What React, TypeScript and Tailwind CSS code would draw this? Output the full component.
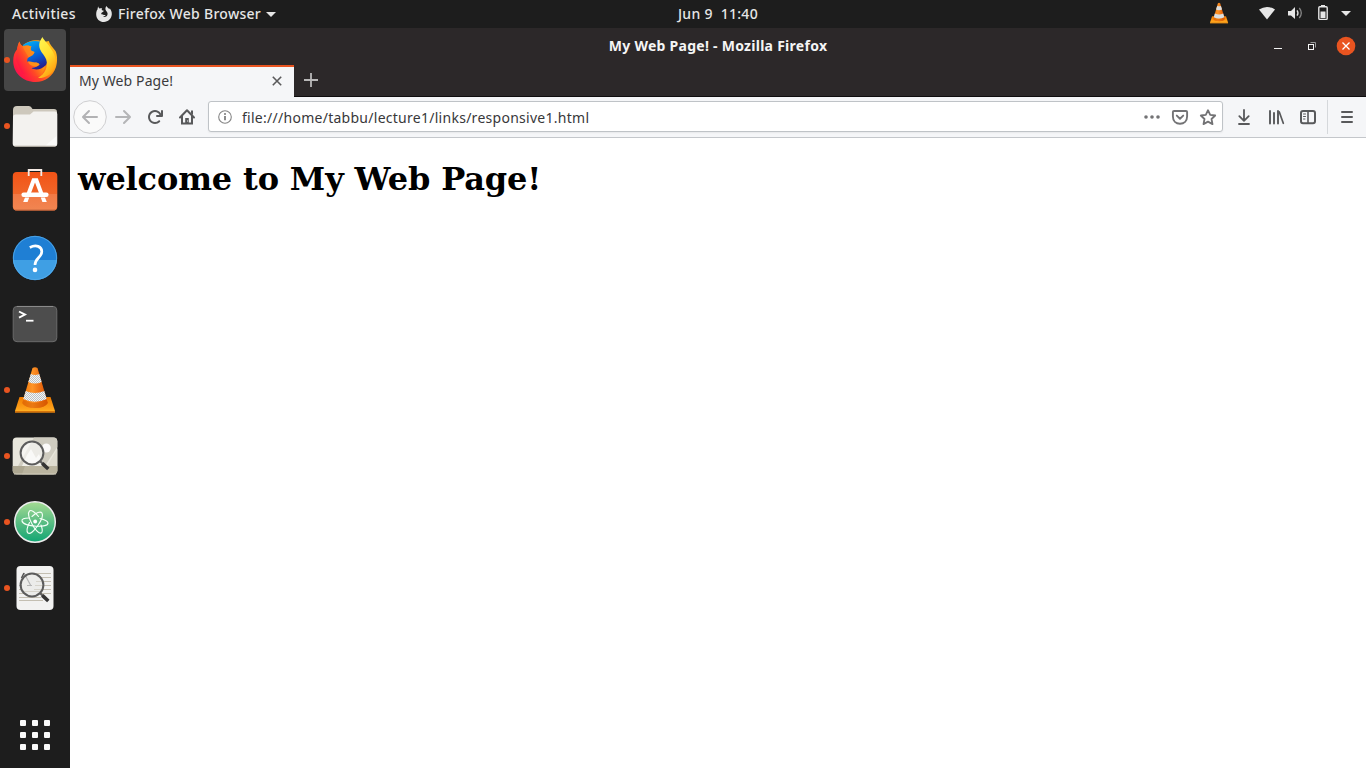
import type { ReactNode } from "react";

const UI = "font-['Noto_Sans','Open_Sans',sans-serif]";

function Firefox() {
  return (
    <g>
      <defs>
        <linearGradient id="ffBody" x1="0" y1="1" x2="1" y2="0.25">
          <stop offset="0" stopColor="#d8108a" />
          <stop offset="0.2" stopColor="#ff1744" />
          <stop offset="0.45" stopColor="#ff4a25" />
          <stop offset="0.7" stopColor="#ff9410" />
          <stop offset="1" stopColor="#ffbd1d" />
        </linearGradient>
        <linearGradient id="ffGlobe" x1="0.3" y1="0" x2="0.7" y2="1">
          <stop offset="0" stopColor="#00a8f4" />
          <stop offset="0.5" stopColor="#0660d8" />
          <stop offset="1" stopColor="#2b1580" />
        </linearGradient>
        <linearGradient id="ffFlame" x1="0.2" y1="0" x2="0.7" y2="1">
          <stop offset="0" stopColor="#fff44f" />
          <stop offset="0.5" stopColor="#ffdf2e" />
          <stop offset="1" stopColor="#ff980e" />
        </linearGradient>
      </defs>
      <path d="M19.5 41.5C20 44 21 45 22.5 46C28 40 38 39 44 42L48.8 41C49.5 44 53 48 55.5 51C57.5 55 57.5 62 56 67C53 76 45 82 35.5 82C23 82 13.2 73 13.2 61C13.2 56 14.5 52 17 49.5C17.5 46 18 43.5 19.5 41.5Z" fill="url(#ffBody)" />
      <path d="M23 45C29 40 38 40 44 43L47.5 57C48 67 42 71.5 35 70.5C28 70 24 66 24 60Z" fill="url(#ffGlobe)" />
      <path d="M19.5 41.5C20 44.5 21.5 46 23 46.2C25.5 45.2 27.5 45.5 28.5 45.6L31.5 46.5C30.5 48 30.5 49.5 31 50.5L34.5 52C34 54.5 31.5 56 28.5 57.5C27 58.5 27.5 60 27 61.5C30 61 32 62.5 34.5 62.5C37 62.5 38.5 63 39.5 64.5C38 66.5 35.5 67.5 31.5 68C35 70.5 41 70 46 65L41 77L22 74L16 60L17 49Z" fill="url(#ffBody)" />
      <path d="M22.5 46.2C25.5 45.2 28 45.5 31.5 46.5C30.5 48 30.5 49.5 31 50.5L34.5 52C34 54.5 31.5 56 28.5 57.5C27 54 24 50 22.5 46.2Z" fill="#ff8a1c" opacity=".65" />
      <path d="M28 61.5C32 61 33 62.5 36 62.5C38 62.5 39 63.5 39.5 64.5C38 66.5 35 66.5 33 66C30 65 28.5 63.5 28 61.5Z" fill="#ff9a18" opacity=".8" />
      <path d="M42.5 37C43.5 40 48 43.5 50.5 48C54 53 58 60 54.5 68C51 76 43 78.5 38 78C45 74 48.5 67 46.2 59.5C44.5 54.5 39 51 39.2 45C39.2 42 41 39 42.5 37Z" fill="url(#ffFlame)" />
    </g>
  );
}

function Folder() {
  return (
    <g>
      <path d="M13 110Q13 106 17 106H29Q31 106 32.5 109H54Q57 109 57 112V142Q57 146 54 146H16Q13 146 13 143Z" fill="#cdc8bc" />
      <path d="M13 117Q13 114.5 15.5 114.5H30L33.5 111.5H55Q57.3 111.5 57.3 114V143.5Q57.3 146.5 54.5 146.5H15.5Q12.7 146.5 12.7 143.5Z" fill="#f3f2ef" />
      <path d="M56.5 136V146H45Z" fill="#fff" opacity=".6" />
      <path d="M14.5 146.2H55.5" stroke="#bbb6aa" strokeWidth="1" />
    </g>
  );
}

function Software() {
  return (
    <g>
      <defs>
        <linearGradient id="bag" x1="0" y1="0" x2="0" y2="1">
          <stop offset="0" stopColor="#f25316" />
          <stop offset="1" stopColor="#ef7438" />
        </linearGradient>
      </defs>
      <rect x="12.8" y="172" width="44.5" height="38.5" rx="4" fill="url(#bag)" />
      <path d="M13 194H57V206Q57 210 53 210H17Q13 210 13 206Z" fill="#fff" opacity=".13" />
      <path d="M15 210H55" stroke="#c6673f" />
      <path d="M28.7 176V170H41.3V176" fill="none" stroke="#f6ebe5" strokeWidth="1.8" />
      <path d="M32 178.3H38L48 202H43.3L35 182.5L26.7 202H22L23.5 198.5Z" fill="#fff" opacity="0" />
      <path d="M32.2 178.2H37.8L43.3 193H39L35 182.5L31 193H26.7Z" fill="#fff" />
      <path d="M25 197.5H29.2L27.6 202H23.2ZM40.8 197.5H45L46.8 202H42.4Z" fill="#fff" />
      <path d="M23.6 194.7H46.4" stroke="#fff" strokeWidth="4.4" strokeLinecap="round" />
    </g>
  );
}

function Help() {
  return (
    <g>
      <circle cx="35" cy="258" r="22.2" fill="#1f7fd4" />
      <path d="M12.9 260H57.1A22.2 22.2 0 0 1 12.9 260Z" fill="#3f9fe4" />
      <circle cx="35" cy="258" r="21.6" fill="none" stroke="#5eb0ea" strokeWidth="1" opacity=".7" />
      <path d="M29.8 247.5C36 244.3 41.8 246.4 41.8 251.5C41.8 257.5 35.2 257.5 35 265" fill="none" stroke="#fff" strokeWidth="2.7" />
      <circle cx="35" cy="269.9" r="2.3" fill="#fff" />
    </g>
  );
}

function Terminal() {
  return (
    <g>
      <rect x="13.2" y="306.4" width="43.6" height="35.3" rx="3.8" fill="#4d4d4d" stroke="#6b6b6b" strokeWidth="1" />
      <path d="M17 306.5H53" stroke="#8a8a8a" />
      <path d="M19 311.5L25 314.6L19 317.7" fill="none" stroke="#fff" strokeWidth="1.9" />
      <path d="M26 320.7H33.5" stroke="#fff" strokeWidth="1.8" />
    </g>
  );
}

function Cone({ id }: { id: string }) {
  const body = `url(#${id}o)`;
  const check = `url(#${id}w)`;
  return (
    <g>
      <defs>
        <linearGradient id={`${id}o`} x1="0" y1="0" x2="1" y2="0">
          <stop offset="0" stopColor="#ee7508" />
          <stop offset="0.4" stopColor="#ff9426" />
          <stop offset="1" stopColor="#d94c00" />
        </linearGradient>
        <linearGradient id={`${id}b`} x1="0" y1="0" x2="0" y2="1">
          <stop offset="0" stopColor="#f07a00" />
          <stop offset="0.8" stopColor="#ffa51c" />
          <stop offset="1" stopColor="#ffc02d" />
        </linearGradient>
        <pattern id={`${id}w`} width="2" height="2" patternUnits="userSpaceOnUse">
          <rect width="2" height="2" fill="#f4f5f6" />
          <rect width="1" height="1" fill="#bcc1c4" />
          <rect x="1" y="1" width="1" height="1" fill="#bcc1c4" />
        </pattern>
      </defs>
      <path d="M19.5 397H50.5L55 411V412.5H15V411Z" fill={`url(#${id}b)`} />
      <path d="M15 411.8H55" stroke="#c85d00" strokeWidth="1.2" />
      <path d="M32.5 368Q35 366.5 37.5 368L47.8 403Q45 408 35 408T22.2 403Z" fill={body} />
      <path d="M22.2 403Q25 408 35 408T47.8 403L46.5 400Q40 403 35 403T23.5 400Z" fill="#d65f00" opacity=".5" />
      <path d="M30.8 374Q35 376 39.2 374L41.7 382Q35 385 28.3 382Z" fill={check} />
      <path d="M25.7 391Q35 395 44.3 391L46.7 399Q35 404.5 23.3 399Z" fill={check} />
    </g>
  );
}

function ImageViewer() {
  return (
    <g>
      <rect x="12.7" y="437.5" width="44.6" height="36.8" rx="4" fill="#e8e6dc" />
      <path d="M34 437.5H53.3Q57.3 437.5 57.3 441.5V447L45 466H18Z" fill="#cfccc0" />
      <path d="M47 466L57.3 449V466Z" fill="#dedbcf" />
      <path d="M27 455L31 449L36 458L39 454L44 466H22Z" fill="#f1f0ea" />
      <path d="M12.7 466H57.3V470.3Q57.3 474.3 53.3 474.3H16.7Q12.7 474.3 12.7 470.3Z" fill="#ada791" />
      <path d="M25 466H57.3V470.3Q57.3 474.3 53.3 474.3H22Z" fill="#bab49f" />
      <path d="M14 474H56" stroke="#d0cbbb" />
      <circle cx="46.3" cy="448" r="4.5" fill="#fff" opacity=".9" />
      <circle cx="32" cy="453" r="11.2" fill="#fff" opacity=".6" />
      <Magnifier y={453} />
    </g>
  );
}

function Magnifier({ y }: { y: number }) {
  return (
    <g fill="none" stroke="#5c5c5c">
      <circle cx="32" cy={y} r="11.4" strokeWidth="2" />
      <path d={`M40 ${y + 8}L43 ${y + 11}`} strokeWidth="2.2" />
      <path d={`M42.3 ${y + 10.4}L48.3 ${y + 16}`} stroke="#343434" strokeWidth="3.6" />
    </g>
  );
}

function Atom() {
  return (
    <g>
      <defs>
        <linearGradient id="atom" x1="0" y1="0" x2="0" y2="1">
          <stop offset="0" stopColor="#a5dc93" />
          <stop offset="0.5" stopColor="#5bbd83" />
          <stop offset="1" stopColor="#10a673" />
        </linearGradient>
      </defs>
      <circle cx="35" cy="522" r="20.3" fill="url(#atom)" stroke="#ececec" strokeWidth="1.5" />
      <g fill="none" stroke="#f5fff8" strokeWidth="1.15" strokeLinecap="round">
        <path d="M29 518C24 518 21.5 519 22 521C22.7 524 29 526 36 526.2C43 526.5 48.3 525.5 48 523C47.8 521 44 519.5 40 518.5" />
        <path d="M38.5 516.5C35 512 31 509.5 29.5 511C27.5 513 29.5 519.5 32.5 525C35.5 530.5 39.5 534 41.3 533C42.8 532 42.3 528.5 41 525" />
        <path d="M32 516.5C36 512.5 40.5 511 42 513C43.5 515.5 41 521 37.5 526C34 531 30 534.5 28 533C26 531.5 27.5 526.5 29.5 522.5" />
      </g>
      <circle cx="35.2" cy="521.5" r="1.9" fill="#fff" />
    </g>
  );
}

function DocViewer() {
  return (
    <g>
      <rect x="16.5" y="566" width="37" height="44" rx="4" fill="#f2f2f1" />
      <path d="M36 573.5H51M38 577.5H51M38 581.5H51M39 585.5H51M38 589.5H51M36 593.5H51M19 589.5H24M19 593.5H26M19 597.5H41M19 600.5H43" stroke="#c4bfb2" strokeWidth="1" />
      <circle cx="32" cy="585" r="11" fill="#ececea" />
      <path d="M36 581.5H43M35 585.5H43M34 589.5H43M23 591.5H40" stroke="#d6d3ca" strokeWidth="1" />
      <path d="M24 573L31 586M27 585.5H32M19 585.5H22" stroke="#b5b5b5" strokeWidth="1.2" />
      <path d="M24 573L21.5 578" stroke="#555" strokeWidth="1.5" />
      <Magnifier y={585} />
    </g>
  );
}

const launchers: { name: string; running: boolean; icon: ReactNode; viewBox: string }[] = [
  { name: "Firefox", running: true, icon: <Firefox />, viewBox: "4 29 62 62" },
  { name: "Files", running: true, icon: <Folder />, viewBox: "4 95 62 62" },
  { name: "Software", running: false, icon: <Software />, viewBox: "4 161 62 62" },
  { name: "Help", running: false, icon: <Help />, viewBox: "4 227 62 62" },
  { name: "Terminal", running: false, icon: <Terminal />, viewBox: "4 293 62 62" },
  { name: "VLC", running: true, icon: <Cone id="dock" />, viewBox: "4 359 62 62" },
  { name: "Image Viewer", running: true, icon: <ImageViewer />, viewBox: "4 425 62 62" },
  { name: "Atom", running: true, icon: <Atom />, viewBox: "4 491 62 62" },
  { name: "Document Viewer", running: true, icon: <DocViewer />, viewBox: "4 557 62 62" },
];

function Dock() {
  return (
    <nav className="flex w-[70px] shrink-0 flex-col items-center bg-[#1d1d1d] pt-px">
      <div className="flex flex-col gap-1">
        {launchers.map((l, i) => (
          <button key={l.name} className={i === 0 ? "relative size-[62px] rounded bg-[#464646]" : "relative size-[62px]"}>
            <svg className="block size-[62px]" viewBox={l.viewBox}>{l.icon}</svg>
            {l.running && <span className="absolute top-[28px] left-0 size-[6px] rounded-full bg-[#e95420]" />}
          </button>
        ))}
      </div>
      <div className="mt-auto mb-[18px] grid grid-cols-3 gap-[6px]">
        {Array.from({ length: 9 }, (_, i) => (
          <span key={i} className="size-[6px] rounded-[1px] bg-[#f7f7f7]" />
        ))}
      </div>
    </nav>
  );
}

function TopBar() {
  return (
    <header className={`${UI} flex h-7 shrink-0 items-center bg-[#1d1d1d] text-[14px] leading-[20px] font-medium text-[#e6e6e6]`}>
      <div className="flex w-[678px] shrink-0 items-center pl-3">
        <span className="w-[84px] whitespace-nowrap tracking-[0.35px]">Activities</span>
        <svg className="mr-1.5 size-4" viewBox="0 0 16 16">
          <path d="M2.4 0.3C2.4 1.6 2.8 2.2 3.7 2.5C4.6 2.2 5.4 2.2 6.2 2.6C5.6 3.2 5.6 3.9 6 4.2L7.8 4.8C7.6 5.9 6 6.2 5.4 6.9C5.2 7.5 5.3 8 5.2 8.3C6.2 8 7 8.5 7.8 8.9C8.6 9.2 9.2 8.8 9.6 9.3C9.1 10.3 8 10.4 7.2 10.4C9.5 12 12.3 9.8 11.4 6.8C10.9 5.4 9.1 4.3 9.4 2.2C9.5 1.2 10 .6 10.6 0C11 1.4 12.8 2.1 13.3 3.2L13.7 2.2C15.2 4 16 6 15.8 8.6C15.4 13 12 16 8 16C3.5 16 .2 12.7 .2 8.4C.2 6 .6 4.6 1.5 3.6C1.6 2.3 1.8 1.2 2.4 .3Z" fill="#e6e6e6" />
        </svg>
        <span className="w-[148px] whitespace-nowrap tracking-[0.28px]">Firefox Web Browser</span>
        <svg className="h-[5px] w-[10px]" viewBox="0 0 10 5"><path d="M0 0H10L5 5Z" fill="#e6e6e6" /></svg>
      </div>
      <span className="whitespace-pre -mt-px tracking-[0.3px]">Jun 9  11:40</span>
      <svg className="ml-auto h-7 w-[160px]" viewBox="1206 0 160 28">
        <g transform="translate(1203.3 -162.4) scale(.45)"><Cone id="tray" /></g>
        <path d="M1259 9.5Q1267 4.5 1275 9.5L1267 19.5Z" fill="#e6e6e6" />
        <path d="M1288 11H1291L1295 7V19L1291 15.5H1288Z" fill="#e6e6e6" />
        <path d="M1297 10.3Q1299 13 1297 15.7" fill="none" stroke="#ddd" strokeWidth="1.3" />
        <path d="M1299.3 8Q1303.3 13 1299.3 18" fill="none" stroke="#858585" strokeWidth="1.3" />
        <path d="M1321 5H1325V7H1321Z" fill="#e6e6e6" />
        <rect x="1318.8" y="6.8" width="8.4" height="12.6" rx="1" fill="none" stroke="#e6e6e6" strokeWidth="1.4" />
        <path d="M1320.5 11.5H1325.5V18H1320.5Z" fill="#e6e6e6" />
        <path d="M1341 11H1351L1346 16Z" fill="#e6e6e6" />
      </svg>
    </header>
  );
}

function TitleBar() {
  return (
    <div className="flex h-9 shrink-0 items-center bg-[#2c2829]">
      <div className="w-[120px]" />
      <h2 className={`${UI} flex-1 text-center text-[14px] leading-5 font-bold whitespace-nowrap tracking-[0.27px] text-[#f5f5f5]`}>My Web Page! - Mozilla Firefox</h2>
      <svg className="h-9 w-[120px]" viewBox="1246 28 120 36">
        <path d="M1274 48.5H1282" stroke="#f2f2f2" />
        <path d="M1310.5 42.5H1315.5V47.5" fill="none" stroke="#999" />
        <rect x="1308.5" y="44.5" width="5" height="5" fill="none" stroke="#f5f5f5" />
        <circle cx="1346" cy="46" r="9.3" fill="#e95420" />
        <path d="M1342.5 42.5L1349.5 49.5M1349.5 42.5L1342.5 49.5" stroke="#fff" strokeWidth="1.3" />
      </svg>
    </div>
  );
}

function TabStrip() {
  return (
    <div className="flex h-[33px] shrink-0 border-b border-[#0f0d0e] bg-[#2c2829] pt-px">
      <div className="flex h-8 w-[224px] items-center border-t-2 border-[#e95420] bg-[#f5f6f8] pl-[9px]">
        <span className={`${UI} -mt-0.5 text-[14px] leading-5 whitespace-nowrap tracking-[0.1px] text-[#3b3b3d]`}>My Web Page!</span>
        <svg className="mt-[-2px] mr-3 ml-auto size-[10px]" viewBox="0 0 10 10"><path d="M.8 .8L9.2 9.2M9.2 .8L.8 9.2" stroke="#5a5a5b" strokeWidth="1.6" /></svg>
      </div>
      <svg className="mt-2 ml-[10px] size-[14px]" viewBox="0 0 14 14"><path d="M7 0V14M0 7H14" stroke="#b9b8b8" strokeWidth="1.8" /></svg>
    </div>
  );
}

function Toolbar() {
  return (
    <div className="flex h-[41px] shrink-0 items-center border-b border-[#c4c7cb] bg-[#f5f6f8]">
      <svg className="h-10 w-[138px] shrink-0" viewBox="70 97 138 40">
        <circle cx="90" cy="117" r="16.3" fill="#fafafa" stroke="#cfcfd1" />
        <path transform="translate(82 109)" fill="#b2b2b4" d="M15 7H3.414l4.293-4.293a1 1 0 0 0-1.414-1.414l-6 6a1 1 0 0 0 0 1.414l6 6a1 1 0 0 0 1.414-1.414L3.414 9H15a1 1 0 0 0 0-2z" />
        <path transform="translate(115 109)" fill="#b4b5b7" d="M15.707 7.293l-6-6a1 1 0 0 0-1.414 1.414L12.586 7H1a1 1 0 0 0 0 2h11.586l-4.293 4.293a1 1 0 1 0 1.414 1.414l6-6a1 1 0 0 0 0-1.414z" />
        <path transform="translate(147 109)" fill="#58595b" d="M15 1a1 1 0 0 0-1 1v2.418A6.995 6.995 0 1 0 8 15a6.954 6.954 0 0 0 4.95-2.05 1 1 0 0 0-1.414-1.414A5.019 5.019 0 1 1 12.549 6H10a1 1 0 0 0 0 2h5a1 1 0 0 0 1-1V2a1 1 0 0 0-1-1z" />
        <path d="M180 117.5L187 110.3L194 117.5" fill="none" stroke="#58595b" strokeWidth="2" strokeLinecap="round" strokeLinejoin="round" />
        <path d="M182 116V123.6H192V116" fill="none" stroke="#58595b" strokeWidth="2" />
        <path d="M185.2 118H188.8V124H185.2ZM191 110.5H193V115L191 113.5Z" fill="#58595b" />
        <path d="M187 121H188" stroke="#f5f6f8" />
      </svg>
      <div className="-mt-px flex h-[31px] w-[1015px] items-center rounded-[3px] border border-[#bfc3c7] bg-white pl-[9px] shadow-[0_1px_2px_rgba(0,0,0,0.06)]">
        <svg className="mr-[10px] size-[14px] shrink-0" viewBox="0 0 14 14">
          <circle cx="7" cy="7" r="6.3" fill="none" stroke="#858585" strokeWidth="1.1" />
          <path d="M7 6V10.3" stroke="#777" strokeWidth="1.7" /><circle cx="7" cy="3.9" r="1" fill="#777" />
        </svg>
        <span className={`${UI} mt-0.5 text-[14px] leading-5 whitespace-nowrap tracking-[0.27px] text-[#38383a]`}>file:///home/tabbu/lecture1/links/responsive1.html</span>
        <svg className="ml-auto h-7 w-[80px] shrink-0" viewBox="1142 103 80 28">
          <g fill="#737375"><circle cx="1146" cy="117" r="1.8" /><circle cx="1152" cy="117" r="1.8" /><circle cx="1158" cy="117" r="1.8" /></g>
          <path d="M1174 111H1186Q1187.1 111 1187.1 112.1V116.5C1187.1 121 1184 123.7 1180 123.7S1172.9 121 1172.9 116.5V112.1Q1172.9 111 1174 111Z" fill="none" stroke="#737375" strokeWidth="1.9" />
          <path d="M1176.8 115.6L1180 118.7L1183.2 115.6" fill="none" stroke="#737375" strokeWidth="1.9" strokeLinecap="round" strokeLinejoin="round" />
          <path d="M1208 110.2L1210.2 114.8L1215.2 115.5L1211.5 119L1212.5 124.1L1208 121.6L1203.5 124.1L1204.5 119L1200.8 115.5L1205.8 114.8Z" fill="none" stroke="#737375" strokeWidth="1.8" strokeLinejoin="round" />
        </svg>
      </div>
      <svg className="h-10 w-[143px] shrink-0" viewBox="1223 97 143 40">
        <g fill="none" stroke="#58595b" strokeWidth="2" strokeLinecap="round" strokeLinejoin="round">
          <path d="M1244 110V120.5M1239.3 116.2L1244 120.8L1248.7 116.2M1239 124H1249" strokeWidth="1.8" />
          <path d="M1270 111V123.5M1274 113V123.5M1278 111V123.5" strokeWidth="1.9" />
          <path d="M1279.3 112L1283.3 123.3" strokeWidth="1.7" />
          <rect x="1301" y="111" width="14" height="12.2" rx="2" />
          <path d="M1308 111V123" strokeWidth="1.6" />
          <path d="M1303.5 114H1305.5M1303.5 116.5H1305.5M1303.5 119H1305" strokeWidth="1" />
          <path d="M1342 112H1352M1342 117H1352M1342 122H1352" />
        </g>
        <path d="M1327.5 100V134" stroke="#d5d8db" />
      </svg>
    </div>
  );
}

export default function App() {
  return (
    <div className="flex h-screen w-full flex-col overflow-hidden bg-white">
      <TopBar />
      <div className="flex min-h-0 flex-1">
        <Dock />
        <section className="flex min-w-0 flex-1 flex-col">
          <TitleBar />
          <TabStrip />
          <Toolbar />
          <main className="flex-1 bg-white px-2 pt-[23px]">
            <h1 className="font-['DejaVu_Serif',serif] text-[32px] leading-[37px] font-bold tracking-[-0.15px] text-black">welcome to My Web Page!</h1>
          </main>
        </section>
      </div>
    </div>
  );
}
